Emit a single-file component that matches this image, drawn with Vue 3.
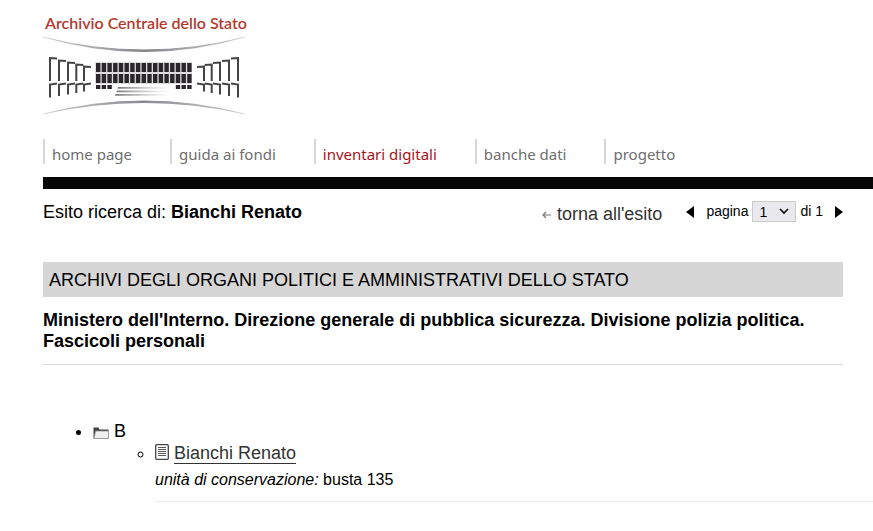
<script setup>
import { ref } from 'vue'

const menu = [
  { label: 'home page' },
  { label: 'guida ai fondi' },
  { label: 'inventari digitali', active: true },
  { label: 'banche dati' },
  { label: 'progetto' }
]

const page = ref(1)

// colonne laterali del palazzo: x, alto, fine della parte inferiore
const columns = [
  [50, 59, 98.5],
  [59, 61.5, 97],
  [68, 63.5, 95.5],
  [76.3, 65.5, 94],
  [84, 67.5, 92.5]
]
const windows = Array.from({ length: 17 }, (_, i) => 96 + i * 5.7)
const lowWindows = windows.filter((_, i) => i < 3 || i > 13)
</script>

<template>
  <div class="page">
    <header>
      <a href="#" class="logo">
        <span class="logo-name">Archivio Centrale dello Stato</span>
        <svg class="logo-building" viewBox="43 36 202 82" aria-hidden="true">
          <defs>
            <linearGradient id="arc">
              <stop offset="0" stop-color="#999" stop-opacity="0.2" />
              <stop offset="0.5" stop-color="#85858b" />
              <stop offset="1" stop-color="#999" stop-opacity="0.2" />
            </linearGradient>
            <linearGradient id="step">
              <stop offset="0" stop-color="#777" />
              <stop offset="1" stop-color="#bbb" stop-opacity="0" />
            </linearGradient>
            <g id="wing" fill="none" stroke="#444" stroke-width="2">
              <template v-for="c in columns" :key="c[0]">
                <path :d="`M${c[0]} 82V${c[1]}L${c[0] + 7} ${c[1] + 0.5}`" />
                <path :d="`M${c[0]} ${c[2]}V85.5L${c[0] + 7} 84.5`" />
              </template>
            </g>
          </defs>
          <path d="M43 38Q144 64 245 38Q144 67 43 38Z" fill="url(#arc)" stroke="url(#arc)" />
          <path d="M43 115Q144 89 245 115Q144 92 43 115Z" fill="url(#arc)" stroke="url(#arc)" />
          <use href="#wing" />
          <use href="#wing" transform="translate(288 0) scale(-1 1)" />
          <rect x="95" y="63" width="97" height="22" fill="#ddd" />
          <g fill="#29272a">
            <rect v-for="x in windows" :key="x" :x="x" y="64" width="4.4" height="9" />
            <rect v-for="x in windows" :key="x" :x="x" y="75" width="4.4" height="9" />
            <rect v-for="x in lowWindows" :key="x" :x="x" y="86" width="4.4" height="4" />
          </g>
          <g fill="url(#step)">
            <path d="M118 88h54v1.700h-54.500z" />
            <path d="M117 91.500h54v1.700h-54.500z" />
            <path d="M115.500 95h56v1.700h-56.500z" />
          </g>
        </svg>
      </a>
      <nav>
        <a v-for="m in menu" :key="m.label" href="#" :class="{ active: m.active }">{{ m.label }}</a>
      </nav>
    </header>

    <main>
      <div class="toolbar">
        <p class="query">Esito ricerca di: <strong>Bianchi Renato</strong></p>
        <a href="#" class="back">
          <svg width="9" height="8" viewBox="0 0 9 8" aria-hidden="true">
            <path d="M4 1L1 4l3 3M1 4h8" fill="none" stroke="#777" stroke-width="1.2" />
          </svg>
          torna all'esito
        </a>
        <form class="pager" @submit.prevent>
          <button type="button" aria-label="pagina precedente">
            <svg width="8" height="12" viewBox="0 0 8 12"><path d="M8 0v12L0 6z" /></svg>
          </button>
          <label for="pagina">pagina</label>
          <span class="select">
            <select id="pagina" v-model="page">
              <option :value="1">1</option>
            </select>
            <svg width="10" height="7" viewBox="0 0 10 7" aria-hidden="true">
              <path d="M1 1l4 4 4-4" fill="none" stroke="#111" stroke-width="1.700" />
            </svg>
          </span>
          <span class="total">di 1</span>
          <button type="button" aria-label="pagina successiva">
            <svg width="8" height="12" viewBox="0 0 8 12"><path d="M0 0v12l8-6z" /></svg>
          </button>
        </form>
      </div>

      <h1>ARCHIVI DEGLI ORGANI POLITICI E AMMINISTRATIVI DELLO STATO</h1>
      <h2>Ministero dell'Interno. Direzione generale di pubblica sicurezza. Divisione polizia politica. Fascicoli personali</h2>

      <ul class="tree">
        <li>
          <svg class="folder" width="16" height="12" viewBox="0 0 16 12" aria-hidden="true">
            <path d="M.5 11.500V.5h5l1 2h9v9z" fill="#444" />
            <path d="M2.500 4h13v7.500H1z" fill="#eee" stroke="#888" stroke-width=".7" />
          </svg>
          B
          <ul>
            <li>
              <svg class="sheet" width="14" height="16" viewBox="0 0 14 16" aria-hidden="true">
                <rect x=".7" y=".7" width="12.600" height="14.600" rx="1" fill="#fff" stroke="#444" stroke-width="1.300" />
                <path d="M3 3.500h8M3 5.500h8M3 7.500h8M3 9.500h8M3 11.500h8" stroke="#555" />
              </svg>
              <a href="#">Bianchi Renato</a>
              <p><em>unità di conservazione:</em> busta 135</p>
            </li>
          </ul>
        </li>
      </ul>
    </main>
  </div>
</template>

<style>
body {
  margin: 0;
  background: #fff;
}
</style>

<style scoped>
.page {
  padding: 11px 0 30px 43px;
  font-family: "Liberation Sans", Arial, sans-serif;
  font-size: 18px;
  line-height: 21px;
  color: #000;
}
.logo {
  display: block;
  width: 202px;
  text-decoration: none;
}
.logo-name {
  display: block;
  padding-left: 2px;
  font: 600 16px/24px "Lato", sans-serif;
  color: #b23a2e;
  white-space: nowrap;
}
.logo-building {
  display: block;
  width: 100%;
}
nav {
  display: flex;
  margin-top: 22px;
  padding-bottom: 13px;
  border-bottom: 12px solid #060606;
}
nav a {
  padding: 6px 38px 0 7px;
  border-left: 2px solid #d6d6d6;
  font: 15px/19px "Noto Sans", sans-serif;
  color: #6e6e6e;
  text-decoration: none;
  white-space: nowrap;
}
nav a.active {
  color: #a5131b;
}
main {
  padding-top: 13px;
}
.toolbar {
  display: flex;
  align-items: flex-start;
  margin-right: 30px;
  height: 60px;
}
.query {
  flex: 1;
  margin: 0;
}
.back {
  display: flex;
  align-items: center;
  gap: 6px;
  margin: 2px 24px 0 0;
  color: #333;
  text-decoration: none;
}
.pager {
  display: flex;
  align-items: center;
  margin-top: -1px;
  font-size: 14px;
}
.pager button {
  display: flex;
  padding: 0;
  border: 0;
  background: none;
}
.pager label {
  margin: 0 4px 0 12px;
}
.total {
  margin: 0 12px 0 4px;
}
.select {
  display: grid;
  align-items: center;
}
.select > * {
  grid-area: 1 / 1;
}
.select svg {
  justify-self: end;
  margin-right: 7px;
  pointer-events: none;
}
select {
  appearance: none;
  width: 44px;
  height: 21px;
  padding: 0 6px;
  border: 1px solid #ccc;
  border-radius: 0;
  background: #e9e9ed;
  font: 14px/18px "Liberation Sans", Arial, sans-serif;
  color: #000;
}
h1 {
  margin: 0 30px 0 0;
  padding: 8px 6px 6px;
  background: #d6d6d6;
  font-size: 18px;
  font-weight: normal;
}
h2 {
  margin: 0 30px 0 0;
  padding: 13px 0 12px;
  border-bottom: 1px solid #d6d6d6;
  font-size: 18px;
}
.tree {
  margin: 56px 0 0;
  padding-left: 50px;
}
.tree ul {
  margin: 1px 0 0;
  padding-left: 62px;
}
.tree ul > li {
  padding-bottom: 11px;
  border-bottom: 1px solid #ececec;
}
.tree p {
  margin: 5px 0 0;
  font-size: 16px;
}
.tree a {
  border-bottom: 1px solid #333;
  color: #333;
  text-decoration: none;
}
.folder {
  vertical-align: -2px;
}
.sheet {
  margin-right: 5px;
  vertical-align: -1px;
}
</style>
